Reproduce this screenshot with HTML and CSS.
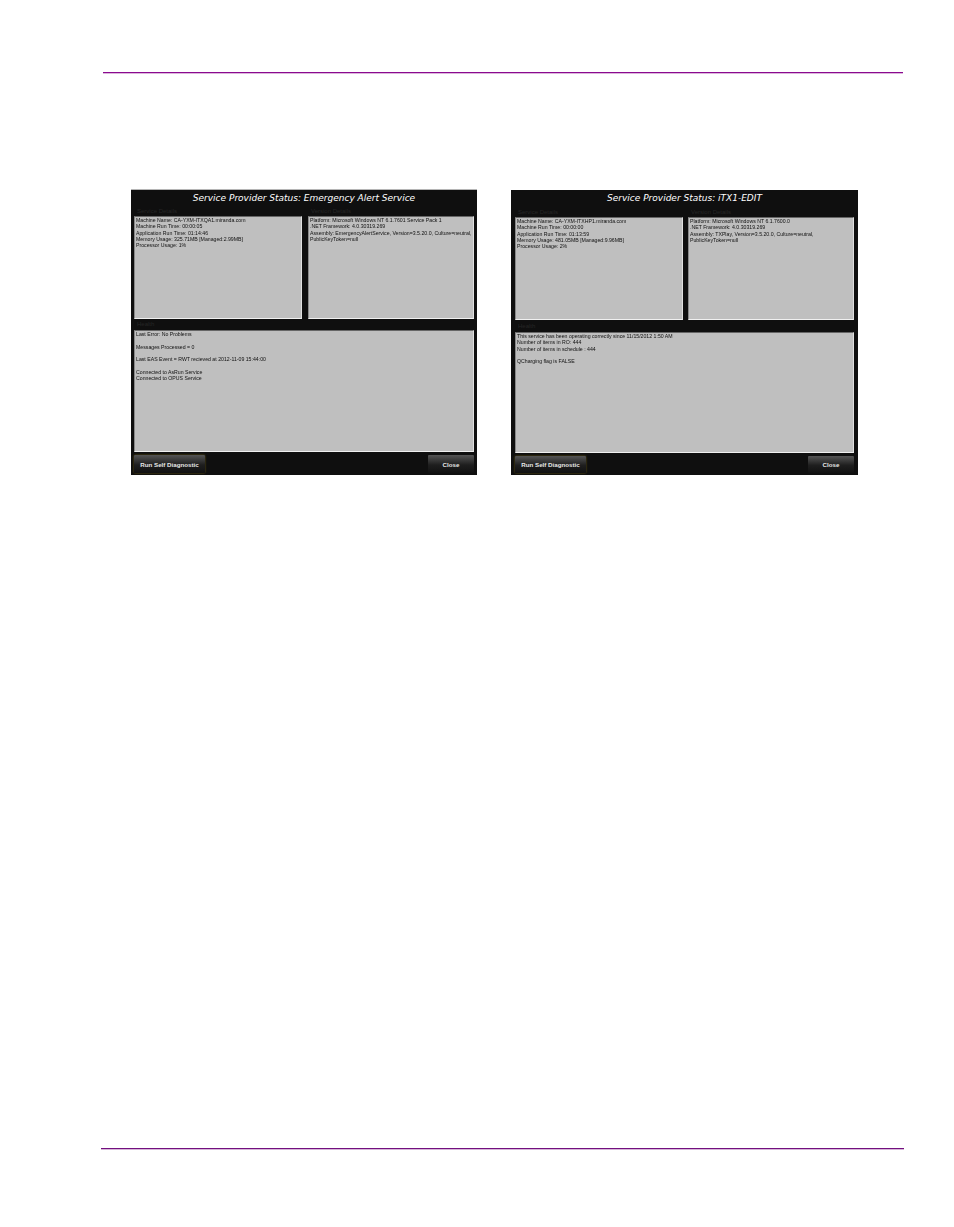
FILE: index.html
```html
<!DOCTYPE html>
<html lang="en">
<head>
<meta charset="UTF-8">
<title>Service Provider Status</title>
<link rel="stylesheet" href="styles.css">
</head>
<body>
<div class="page">
    <div class="rule rule-top"></div>
    <div class="windows">
        <div class="window window-eas">
            <h2 class="title">Service Provider Status: Emergency Alert Service</h2>
            <div class="details">
                <div class="group">
                    <div class="label">Service Details</div>
                    <div class="panel">Machine Name: CA-YXM-ITXQA1.miranda.com<br>Machine Run Time: 00:00:05<br>Application Run Time: 01:14:46<br>Memory Usage: 325.71MB [Managed:2.99MB]<br>Processor Usage: 1%</div>
                </div>
                <div class="group">
                    <div class="label">Version Details</div>
                    <div class="panel">Platform: Microsoft Windows NT 6.1.7601 Service Pack 1<br>.NET Framework: 4.0.30319.269<br>Assembly: EmergencyAlertService, Version=3.5.20.0, Culture=neutral,<br>PublicKeyToken=null</div>
                </div>
            </div>
            <div class="label label-health">Health</div>
            <div class="panel panel-health">Last Error: No Problems<br><br>Messages Processed = 0<br><br>Last EAS Event = RWT recieved at 2012-11-09 15:44:00<br><br>Connected to AsRun Service<br>Connected to OPUS Service</div>
            <div class="buttons">
                <button class="btn btn-run">Run Self Diagnostic</button>
                <button class="btn btn-close">Close</button>
            </div>
        </div>
        <div class="window window-itx">
            <h2 class="title">Service Provider Status: iTX1-EDIT</h2>
            <div class="details">
                <div class="group">
                    <div class="label">Service Details</div>
                    <div class="panel">Machine Name: CA-YXM-ITXHP1.miranda.com<br>Machine Run Time: 00:00:00<br>Application Run Time: 01:13:59<br>Memory Usage: 481.05MB [Managed:9.96MB]<br>Processor Usage: 2%</div>
                </div>
                <div class="group">
                    <div class="label">Version Details</div>
                    <div class="panel">Platform: Microsoft Windows NT 6.1.7600.0<br>.NET Framework: 4.0.30319.269<br>Assembly: TXPlay, Version=3.5.20.0, Culture=neutral,<br>PublicKeyToken=null</div>
                </div>
            </div>
            <div class="label label-health">Health</div>
            <div class="panel panel-health">This service has been operating correctly since 11/15/2012 1:50 AM<br>Number of items in RO: 444<br>Number of items in schedule : 444<br><br>QCharging flag is FALSE</div>
            <div class="buttons">
                <button class="btn btn-run">Run Self Diagnostic</button>
                <button class="btn btn-close">Close</button>
            </div>
        </div>
    </div>
    <div class="rule rule-bottom"></div>
</div>
</body>
</html>
```
FILE: styles.css
```css
*{
    box-sizing: border-box;
    font-family: "Liberation Sans", Arial, sans-serif;
}
body{
    margin: 0;
    background-color: white;
}
.page{
    height: 1227px;
    display: flex;
    flex-direction: column;
}
.rule{
    height: 1px;
}
.rule-top{
    margin: 72px 51px 0 103px;
    background-color: #8a0a8e;
    box-shadow: 0 1px 0 rgba(138, 10, 142, 0.3);
}
.rule-bottom{
    margin: 673px 50px 0 101px;
    background-color: #73107f;
    box-shadow: 0 1px 0 rgba(115, 16, 127, 0.3);
}
.windows{
    height: 402px;
    padding: 0 96px 0 131px;
    display: flex;
    justify-content: space-between;
    align-items: flex-end;
}
.window{
    width: 346px;
    background-color: #0f0f0f;
    padding: 0 3px;
}
.window-eas{
    height: 286px;
    border-top: 1px solid #b5b5b5;
}
.window-itx{
    height: 285px;
    width: 347px;
    padding: 0 4px;
}
.title{
    margin: 0;
    height: 16px;
    line-height: 16px;
    text-align: center;
    color: white;
    font-family: "DejaVu Sans", sans-serif;
    font-size: 9px;
    font-style: italic;
    font-weight: normal;
}
.window-itx .title{
    height: 17px;
    line-height: 17px;
}
.details{
    display: flex;
    gap: 6px;
}
.window-itx .details{
    gap: 5px;
}
.group:first-child{
    width: 168px;
}
.group:last-child{
    flex: 1;
}
.label{
    height: 10px;
    padding-left: 3px;
    color: #262626;
    font-size: 6px;
    line-height: 10px;
}
.label-health{
    height: 11px;
    line-height: 11px;
}
.window-itx .label-health{
    height: 12px;
    line-height: 12px;
}
.panel{
    height: 103px;
    padding: 0 1px;
    background-color: #bfbfbf;
    border-top: 1px solid #666;
    border-left: 1px solid #888;
    border-bottom: 1px solid #f0f0f0;
    border-right: 1px solid #e0e0e0;
    color: #111;
    font-size: 5.2px;
    line-height: 6.3px;
    white-space: nowrap;
    filter: blur(0.25px);
}
.panel-health{
    height: 122px;
}
.window-itx .panel-health{
    height: 121px;
}
.buttons{
    display: flex;
    justify-content: space-between;
    margin-top: 3px;
}
.btn{
    height: 18px;
    padding: 0;
    border: none;
    border-radius: 1px;
    background: linear-gradient(#555555, #1e1e1e 55%, #111111);
    color: #e8e8e8;
    font-size: 6.2px;
    font-weight: bold;
}
.window-itx .btn{
    height: 17px;
}
.btn-run{
    width: 71px;
    box-shadow: 0 0 2px #7a6712;
}
.btn-close{
    width: 46px;
}
```
